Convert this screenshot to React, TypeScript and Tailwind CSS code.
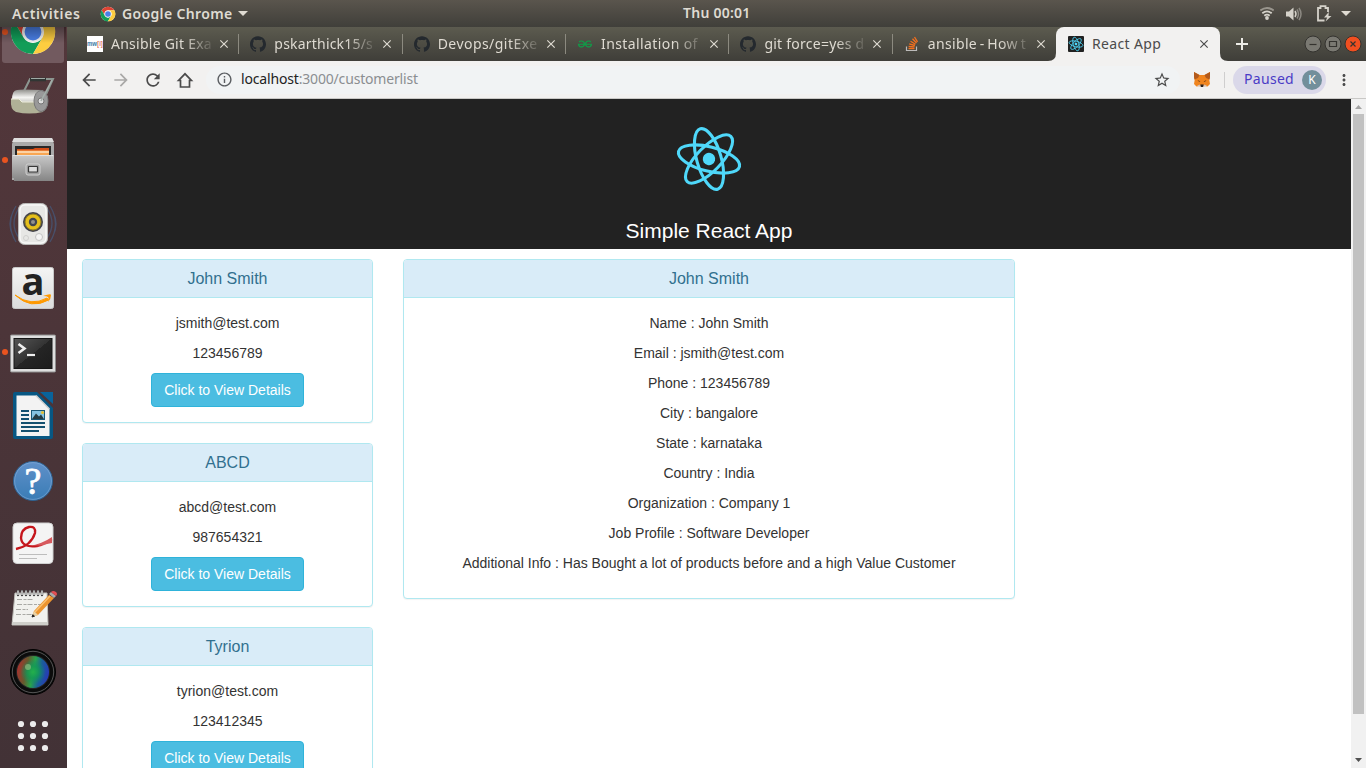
import type { ReactNode } from "react";
import { MdArrowBack, MdArrowForward, MdRefresh, MdStarBorder, MdInfoOutline, MdMoreVert, MdClose } from "react-icons/md";
import { SiGithub, SiGeeksforgeeks } from "react-icons/si";

const UI = "font-['Noto_Sans',sans-serif]";

function ReactAtom({ className, stroke = 3.1 }: { className: string; stroke?: number }) {
  return (
    <svg viewBox="-40 -40 80 80" className={className} fill="none" stroke="#4fd8fa" strokeWidth={stroke}>
      <g transform="rotate(14)">
        <ellipse rx="31.4" ry="12.2" />
        <ellipse rx="31.4" ry="12.2" transform="rotate(60)" />
        <ellipse rx="31.4" ry="12.2" transform="rotate(120)" />
        <circle r="6.2" fill="#4fd8fa" stroke="none" />
      </g>
    </svg>
  );
}

function ChromeLogo({ className }: { className: string }) {
  return (
    <svg viewBox="0 0 48 48" className={className}>
      <circle cx="24" cy="24" r="22" fill="#fff" />
      <path d="M24 13H43.1A22 22 0 0 0 4.9 13L14.5 29.5A11 11 0 0 1 24 13Z" fill="#de4434" />
      <path d="M14.5 29.5L4.9 13A22 22 0 0 0 24 46L33.5 29.5A11 11 0 0 1 14.5 29.5Z" fill="#129d58" />
      <path d="M33.5 29.5L24 46A22 22 0 0 0 43.1 13H24A11 11 0 0 1 33.5 29.5Z" fill="#fdcd40" />
      <circle cx="24" cy="24" r="10.4" fill="#f1f1f1" />
      <circle cx="24" cy="24" r="8.4" fill="#4a80e8" />
    </svg>
  );
}

function TopBar() {
  return (
    <header className={`relative z-10 flex h-[27px] shrink-0 items-center bg-linear-to-b from-[#5a554d] to-[#403f3a] text-[14px] font-semibold text-[#dfdbd2] ${UI}`}>
      <div className="flex w-[683px] items-center">
        <span className="w-[88px] pl-3 tracking-[0.6px]">Activities</span>
        <ChromeLogo className="ml-3 size-4" />
        <span className="ml-[6px] w-[111px] whitespace-nowrap tracking-[0.35px]">Google Chrome</span>
        <svg viewBox="0 0 10 5" className="ml-[5px] h-[5px] w-[10px] fill-[#dfdbd2]"><path d="M0 0H10L5 5Z" /></svg>
      </div>
      <span className="whitespace-nowrap pb-[2px] tracking-[0.25px]">Thu 00:01</span>
      <div className="ml-auto flex items-center pr-[15px]">
        <svg viewBox="0 0 14 13" className="mr-[-1px] h-[13px] w-[14px]" fill="none" stroke="#d5d2ca" strokeWidth="1.8">
          <path d="M.3 3.5Q7-1.5 13.7 3.5" stroke="#99958d" />
          <path d="M2.3 6.3Q7 2.5 11.7 6.3M4.3 8.8Q7 6.5 9.7 8.8" />
          <circle cx="7" cy="11" r="1.9" fill="#d5d2ca" stroke="none" />
        </svg>
        <svg viewBox="0 0 16 14" className="ml-[13px] h-[14px] w-[16px]" fill="none" strokeWidth="1.5">
          <path d="M0 4.5H3L7.5.5V13.5L3 9.5H0Z" fill="#d5d2ca" />
          <path d="M9 4Q11 7 9 10" stroke="#d5d2ca" />
          <path d="M11 2.5Q14 7 11 11.5M13 1Q17 7 13 13" stroke="#8c8982" />
        </svg>
        <svg viewBox="0 0 15 17" className="ml-[15px] h-[17px] w-[15px]" fill="none" stroke="#d5d2ca" strokeWidth="1.8">
          <path d="M7.5 15.5H1V3H3.5V1.2H8.5V3H11V7" />
          <path d="M11.8 7L7 12.5H10.2L8.5 16.5L14.5 11H11.5Z" fill="#d5d2ca" stroke="none" />
        </svg>
        <svg viewBox="0 0 10 5" className="ml-[9px] h-[5px] w-[10px] fill-[#dfdbd2]"><path d="M0 0H10L5 5Z" /></svg>
      </div>
    </header>
  );
}

function Dot() {
  return <span className="absolute top-[29px] left-[2px] size-[6px] rounded-full bg-[#e95420]" />;
}

function DockItem({ children, running = false, active = false }: { children: ReactNode; running?: boolean; active?: boolean }) {
  return (
    <div className="relative flex h-16 w-[66px] shrink-0 items-center justify-center">
      {active && <span className="absolute top-0 left-[2px] h-[63px] w-[62px] rounded-[3px] bg-[#725a5f]" />}
      {running && <Dot />}
      {children}
    </div>
  );
}

function Dock() {
  const icon = "relative size-12";
  return (
    <nav className="w-[67px] shrink-0 overflow-hidden bg-linear-to-b from-[#53373b] to-[#423236]">
      <div className="-mt-[27px] flex flex-col">
        <DockItem running active>
          <ChromeLogo className={icon} />
          <span className="absolute top-[27px] left-0 h-4 w-full bg-linear-to-b from-black/35 to-transparent" />
        </DockItem>
        <DockItem>
          <svg viewBox="0 0 48 48" className={icon}>
            <defs>
              <linearGradient id="roll" x1="0" y1="0" x2="0" y2="1"><stop offset="0" stopColor="#8f8f8b" /><stop offset=".35" stopColor="#f4f4f2" /><stop offset="1" stopColor="#77776f" /></linearGradient>
            </defs>
            <path d="M14 21L21 7H44L34 29" fill="none" stroke="#8b9690" strokeWidth="2" />
            <path d="M21 7.5H37" stroke="#303634" strokeWidth="3.6" />
            <path d="M22 6.5H36" stroke="#a0aaa5" strokeWidth="1" />
            <path d="M8 18Q11 17 33 18Q39 20 39 29T33 40H9Q3 38 3 28T8 18Z" fill="url(#roll)" />
            <path d="M2 27H10L13 30H30L34 40Q20 43 7 40Q1 38 2 27Z" fill="#b0b197" />
            <path d="M2 27H10L13 30H29" fill="none" stroke="#eeeedd" />
            <ellipse cx="32" cy="29" rx="7" ry="10.5" fill="#999" stroke="#777" />
            <circle cx="32" cy="29" r="3" fill="#ddd" stroke="#777" />
            <path d="M32 29L43 8" stroke="#a5afaa" strokeWidth="1.6" />
          </svg>
        </DockItem>
        <DockItem running>
          <svg viewBox="0 0 48 48" className={icon}>
            <defs><linearGradient id="cab" x1="0" y1="0" x2="0" y2="1"><stop stopColor="#c9c9c9" /><stop offset="1" stopColor="#858585" /></linearGradient></defs>
            <path d="M5 2H43L45 8V44H3V8Z" fill="#aaa" />
            <path d="M5 2H43L45 6H3Z" fill="#dedede" />
            <path d="M6 10H42V20H6Z" fill="#292929" />
            <path d="M8 13H24L26 12H40V20H8Z" fill="#d34e18" />
            <path d="M8 14.5H40V20H8Z" fill="#f8a653" />
            <path d="M8 16H40" stroke="#fff0db" strokeWidth="1.2" />
            <path d="M3 19H45V45H5V42H3Z" fill="url(#cab)" />
            <path d="M4 19.5H44" stroke="#e1e1e1" />
            <rect x="17" y="28" width="14" height="11" rx="2" fill="#a1a1a1" stroke="#d1d1d1" />
            <rect x="19.5" y="30.5" width="9" height="5.5" rx=".5" fill="#ddd" stroke="#383838" strokeWidth="1.2" />
          </svg>
        </DockItem>
        <DockItem>
          <svg viewBox="0 0 48 48" className={icon}>
            <path d="M7 6Q-4 24 7 42M41 6Q52 24 41 42M4 12Q-2 24 4 36M44 12Q50 24 44 36M10 8Q0 24 10 38M38 8Q48 24 38 38" fill="none" stroke="#48506a" strokeWidth="1.3" />
            <rect x="9.5" y="3.5" width="29" height="41" rx="6" fill="#e7e7e5" stroke="#babab8" />
            <rect x="11" y="5" width="26" height="38" rx="5" fill="none" stroke="#fff" />
            <circle cx="24" cy="22" r="10" fill="#43434b" />
            <circle cx="24" cy="22" r="8" fill="#e5bf1b" stroke="#907d22" />
            <circle cx="24" cy="22" r="4.2" fill="#414651" />
            <circle cx="24" cy="22" r="2" fill="#92918b" />
            <circle cx="30" cy="37" r="3.5" fill="#f5f5f5" stroke="#c4c4c4" />
            <circle cx="17" cy="38" r="2.5" fill="none" stroke="#d0d0ce" />
          </svg>
        </DockItem>
        <DockItem>
          <svg viewBox="0 0 48 48" className={icon}>
            <defs><linearGradient id="amz" x1="0" y1="0" x2="0" y2="1"><stop stopColor="#f4f4f4" /><stop offset="1" stopColor="#dcdcdc" /></linearGradient></defs>
            <rect x="3.5" y="3.5" width="41" height="41" rx="2" fill="url(#amz)" stroke="#c8c8c8" />
            <text x="24" y="31" textAnchor="middle" fontFamily="Open Sans" fontWeight="700" fontSize="38" fill="#222">a</text>
            <path d="M6 31Q22 43 38 34L39.5 36Q22 46 6 31Z" fill="#f90" stroke="#f90" />
            <path d="M34 32Q42 29 42 31Q42 35 39 38Q40 34 39 33Q38 32 34 32Z" fill="#f90" />
          </svg>
        </DockItem>
        <DockItem running>
          <svg viewBox="0 0 48 48" className={icon}>
            <defs><linearGradient id="term" x1="0" y1="0" x2="1" y2="1"><stop stopColor="#555" /><stop offset=".5" stopColor="#333" /><stop offset=".5" stopColor="#252525" /><stop offset="1" stopColor="#1c1c1c" /></linearGradient></defs>
            <rect x="1.5" y="7" width="45" height="37" rx="1" fill="#dedede" stroke="#8e8e8e" />
            <rect x="5" y="10.5" width="38" height="30" fill="url(#term)" stroke="#161616" />
            <path d="M9.5 16L15.5 20.5L9.5 25" fill="none" stroke="#eee" strokeWidth="2.6" />
            <path d="M18 27H26" stroke="#eee" strokeWidth="2.2" />
          </svg>
        </DockItem>
        <DockItem>
          <svg viewBox="0 0 48 48" className={icon}>
            <path d="M6 0H28L44 16V45Q44 47 42 47H6Q4 47 4 45V2Q4 0 6 0Z" fill="#075783" />
            <path d="M31 0H44V12Z" fill="#0a639a" />
            <path d="M7.5 3.5H27L40.5 17V44H7.5Z" fill="#f3f3f3" />
            <path d="M27 3.5L40.5 17" stroke="#cfcfcf" strokeWidth="1.5" />
            <path d="M12 19H20M12 23H20M12 27H20M12 31H36M12 35H36M12 39H30" stroke="#14506f" strokeWidth="2" />
            <rect x="22" y="18" width="14" height="10" fill="#1b5775" />
            <rect x="23" y="19" width="12" height="8" fill="#86c2e1" />
            <path d="M23 27L27 21.5L30 24.5L32 22.5L35 27Z" fill="#263b42" />
            <circle cx="33.5" cy="20.5" r="1.6" fill="#e5bf35" />
          </svg>
        </DockItem>
        <DockItem>
          <svg viewBox="0 0 48 48" className={icon}>
            <defs><linearGradient id="help" x1="0" y1="0" x2="0" y2="1"><stop stopColor="#6090c9" /><stop offset="1" stopColor="#397cb5" /></linearGradient></defs>
            <circle cx="24" cy="25" r="19.5" fill="url(#help)" stroke="#2e6190" />
            <circle cx="24" cy="25" r="18.4" fill="none" stroke="#83acd8" strokeOpacity=".6" />
            <text x="24" y="38" textAnchor="middle" fontFamily="Liberation Serif" fontSize="38" fill="#fff" stroke="#fff" strokeWidth=".8">?</text>
          </svg>
        </DockItem>
        <DockItem>
          <svg viewBox="0 0 48 48" className={icon}>
            <defs><linearGradient id="swoosh" x1="0" y1="0" x2="1" y2="0"><stop stopColor="#c5161c" /><stop offset=".55" stopColor="#c5161c" /><stop offset="1" stopColor="#e9999b" /></linearGradient></defs>
            <rect x="4" y="3" width="40" height="40.5" rx="4" fill="#f4f4f4" stroke="#d0d0d0" />
            <path d="M7 29Q22 26 26 13Q27 6 20 7Q12 9 12 18Q13 28 28 26Q37 24 43 19" fill="none" stroke="url(#swoosh)" strokeWidth="2.4" />
            <path d="M20 26Q33 24 43 17V23Q32 26 20 26Z" fill="#d75a5e" />
            <path d="M10 34.5H38M10 38.5H28" stroke="#bdbdbd" strokeWidth="1.2" />
          </svg>
        </DockItem>
        <DockItem>
          <svg viewBox="0 0 48 48" className={icon}>
            <path d="M6 9H38L39 41H3Z" fill="#f1f1ee" stroke="#bfbfba" />
            <path d="M3 38H39V41H3Z" fill="#cfcfca" />
            <path d="M9 11V7M13 11V7M17 11V7M21 11V7M25 11V7M29 11V7M33 11V7" stroke="#444" strokeWidth="2.4" strokeLinecap="round" />
            <path d="M9 11V6.5M13 11V6.5M17 11V6.5M21 11V6.5M25 11V6.5M29 11V6.5M33 11V6.5" stroke="#eee" strokeWidth="1.3" />
            <path d="M8 15.5H24M8 20.5H32M7 25.5H19M7 30.5H28" stroke="#a9a9a5" strokeWidth="1" strokeDasharray="5 1.5 3 1" />
            <path d="M25 27L40 11L45 14L29 31L23 33Z" fill="#ec942f" />
            <path d="M25 27L23 33L29 31Z" fill="#e8d2a6" />
            <path d="M23 33L23.8 30.7L25.5 32.2Z" fill="#222" stroke="#222" />
            <path d="M26 28L41 12" stroke="#fac274" strokeWidth="1.5" />
            <path d="M40 10L42 8L47 12L45 14Z" fill="#aaa" />
            <path d="M42 8Q44 6 47 8Q49 10 47 12Z" fill="#e44e54" />
          </svg>
        </DockItem>
        <DockItem>
          <svg viewBox="0 0 48 48" className={icon}>
            <defs>
              <linearGradient id="lens" x1="0" y1=".4" x2="1" y2=".6"><stop stopColor="#a9322f" /><stop offset=".28" stopColor="#655a2d" /><stop offset=".5" stopColor="#27a34b" /><stop offset=".72" stopColor="#1a5e9a" /><stop offset="1" stopColor="#2838b8" /></linearGradient>
              <radialGradient id="core"><stop stopColor="#24b04c" /><stop offset=".5" stopColor="#129a55" stopOpacity=".8" /><stop offset="1" stopColor="#128a68" stopOpacity=".1" /></radialGradient>
            </defs>
            <circle cx="24" cy="24" r="22.5" fill="#0c0c0c" stroke="#000" />
            <circle cx="24" cy="24" r="20.7" fill="none" stroke="#666" strokeWidth=".8" />
            <circle cx="24" cy="24" r="17" fill="#252525" />
            <circle cx="24" cy="24" r="16" fill="url(#lens)" />
            <circle cx="24" cy="24" r="12" fill="url(#core)" />
            <circle cx="19" cy="19" r="3" fill="#8dbb7d" fillOpacity=".7" />
          </svg>
        </DockItem>
        <DockItem>
          <svg viewBox="0 0 48 48" className={icon} fill="#ececec">
            {[12, 24, 36].map((y) => [12, 24, 36].map((x) => <circle key={`${x}-${y}`} cx={x} cy={y} r="3.1" />))}
          </svg>
        </DockItem>
      </div>
    </nav>
  );
}

const tabs = [
  { title: "Ansible Git Exa", kind: "mw", cls: "tracking-[0.25px]" },
  { title: "pskarthick15/s", kind: "gh", cls: "tracking-[0.2px]" },
  { title: "Devops/gitExe", kind: "gh", cls: "tracking-[0.45px]" },
  { title: "Installation of", kind: "gfg", cls: "tracking-[0.4px]" },
  { title: "git force=yes d", kind: "gh", cls: "tracking-[0.25px]" },
  { title: "ansible - How t", kind: "so", cls: "tracking-[0.35px] [word-spacing:-1.3px]" },
];

function Favicon({ kind }: { kind: string }) {
  if (kind === "gh") return <SiGithub className="size-4 shrink-0 text-[#24292e]" />;
  if (kind === "so")
    return (
      <svg viewBox="0 0 16 16" className="size-4 shrink-0" fill="none">
        <path d="M2.5 10.5V14.5H12.5V10.5" stroke="#bcbbbb" strokeWidth="1.2" />
        <path d="M4.5 12.5H10.5M4.6 10.3L10.5 10.9M5.2 7.9L10.9 9.5M6.5 5.2L11.5 8.3M8.5 2.8L12.5 7M10.5 1L13.5 5.8" stroke="#f4701e" strokeWidth="1.3" />
      </svg>
    );
  if (kind === "gfg")
    return (
      <span className="flex size-4 shrink-0 items-center justify-center">
        <SiGeeksforgeeks className="size-[14px] text-[#0f9d48]" />
      </span>
    );
  return (
    <svg viewBox="0 0 16 16" className="size-4 shrink-0">
      <rect width="16" height="16" fill="#fff" />
      <text x="0" y="10" textLength="10" lengthAdjust="spacingAndGlyphs" fontFamily="Liberation Sans" fontWeight="700" fontSize="7" fill="#3b79a6">mw</text>
      <text x="10" y="10" textLength="6" lengthAdjust="spacingAndGlyphs" fontFamily="Liberation Sans" fontSize="7" fill="#dc5749">[i]</text>
    </svg>
  );
}

function TabStrip() {
  return (
    <div className={`flex h-[34px] bg-linear-to-b from-[#5c5b4f] to-[#3f3e39] pl-[9px] text-[14px] ${UI}`}>
      {tabs.map((t, i) => (
        <div key={t.title} className="flex w-[163.35px] shrink-0 items-center pl-[11px] text-[#dfdbd2]">
          <Favicon kind={t.kind} />
          <span className={`ml-2 w-[105px] overflow-hidden whitespace-nowrap pb-px mask-[linear-gradient(to_right,#000_72px,transparent_105px)] ${t.cls}`}>{t.title}</span>
          <MdClose className="ml-[1px] size-[14px] shrink-0" />
          {i < 5 && <span className="ml-auto h-5 w-px bg-[#8c8a80]" />}
        </div>
      ))}
      <div className="relative flex w-[164px] shrink-0 items-center rounded-t-[8px] bg-[#f2f1f0] pl-[11.9px] text-[#4b4b4b]">
        <svg viewBox="0 0 8 8" className="absolute bottom-0 -left-2 size-2 fill-[#f2f1f0]"><path d="M8 0Q8 8 0 8H8Z" /></svg>
        <svg viewBox="0 0 8 8" className="absolute -right-2 bottom-0 size-2 fill-[#f2f1f0]"><path d="M0 0Q0 8 8 8H0Z" /></svg>
        <span className="flex size-4 items-center justify-center rounded-[1px] bg-[#222]"><ReactAtom className="size-[18px] shrink-0" stroke={3.6} /></span>
        <span className="ml-2 w-[104px] pb-px tracking-[0.35px]">React App</span>
        <MdClose className="ml-[1px] size-[14px]" />
      </div>
      <svg viewBox="0 0 18 18" className="mt-[8px] ml-[13px] size-[18px]" stroke="#ecebe6" strokeWidth="2"><path d="M3 9H15M9 3V15" /></svg>
      <div className="ml-auto flex items-center gap-[2px] pr-[4px]">
        {["M5.5 9.5H12.5", "M5.5 6.5H12.5V11.5H5.5Z", "M6.5 6.5L11.5 11.5M11.5 6.5L6.5 11.5"].map((d, i) => (
          <svg key={d} viewBox="0 0 18 18" className="size-[18px]" fill="none">
            <circle cx="9" cy="9" r="8" fill={i === 2 ? "#f04f20" : "#7a7972"} stroke="#34332f" strokeWidth="1" />
            <path d={d} stroke="#34332f" strokeWidth="1.2" />
          </svg>
        ))}
      </div>
    </div>
  );
}

function Toolbar() {
  return (
    <div className={`flex h-[38px] items-center border-b border-[#c9c8c6] bg-[#f2f1f0] pl-[12px] text-[14px] text-[#4b4b4b] ${UI}`}>
      <MdArrowBack className="size-5" />
      <MdArrowForward className="ml-3 size-5 text-[#a9a8a7]" />
      <MdRefresh className="ml-[12px] size-5" />
      <svg viewBox="0 0 20 20" className="ml-[12px] size-5" fill="none" stroke="currentColor" strokeWidth="1.7"><path d="M3.6 10.5H5.500V17H14.500V10.500H16.400L10 3.800Z" /></svg>
      <div className="ml-[11px] flex h-7 w-[974px] items-center rounded-full bg-[#f1f3f4] pr-[9px] pl-[10px]">
        <MdInfoOutline className="size-[17px] text-[#5a5d61]" />
        <span className="ml-2 pb-[2px] tracking-[-0.17px] text-[#8b8e91]"><span className="text-[#222]">localhost</span>:3000/customerlist</span>
        <MdStarBorder className="ml-auto size-[18px]" />
      </div>
      <svg viewBox="0 0 18 17" className="ml-[13px] h-[17px] w-[18px]">
        <path d="M1 1L6.5 4H11.5L17 1V6L16.3 9L17 13L14.5 15.5L11 15H7L3.5 15.5L1 13L1.7 9L1 6Z" fill="#f0841e" />
        <path d="M1 1L6.5 4L5 7L1.5 8.5L1 6ZM17 1L11.5 4L13 7L16.5 8.5L17 6Z" fill="#b35a1c" />
        <path d="M4.5 9L7.5 10.5L6 10.8ZM13.5 9L10.5 10.5L12 10.8Z" fill="#5a3519" />
        <path d="M7.2 13.5H10.8L10.3 16H7.7Z" fill="#2b2320" />
        <path d="M4 14.5L7.2 13.5L7.5 16ZM14 14.5L10.8 13.5L10.5 16Z" fill="#d5bfb2" />
      </svg>
      <span className="ml-[13px] h-4 w-px bg-[#cfcece]" />
      <div className="ml-2 flex h-7 w-[93px] items-center rounded-full bg-[#dad8e9] pr-1 pl-[11px] text-[#4a3cc6]">
        <span className="pb-[2px] tracking-[0.3px]">Paused</span>
        <span className="ml-auto flex size-5 items-center justify-center rounded-full bg-[#728f9b] text-[12px] text-white">K</span>
      </div>
      <MdMoreVert className="ml-[9px] size-[18px]" />
    </div>
  );
}

const customers = [
  { name: "John Smith", email: "jsmith@test.com", phone: "123456789" },
  { name: "ABCD", email: "abcd@test.com", phone: "987654321" },
  { name: "Tyrion", email: "tyrion@test.com", phone: "123412345" },
];

const details = [
  "Name : John Smith",
  "Email : jsmith@test.com",
  "Phone : 123456789",
  "City : bangalore",
  "State : karnataka",
  "Country : India",
  "Organization : Company 1",
  "Job Profile : Software Developer",
  "Additional Info : Has Bought a lot of products before and a high Value Customer",
];

function Panel({ title, children }: { title: string; children: ReactNode }) {
  return (
    <section className="mb-5 rounded-[4px] border border-[#b0e8f0] bg-white shadow-[0_1px_1px_rgba(0,0,0,0.05)]">
      <h3 className="rounded-t-[3px] border-b border-[#b0e8f0] bg-[#d9ecf8] px-[15px] py-[10px] text-base leading-[17px] text-[#31708f]">{title}</h3>
      <div className="p-[15px]">{children}</div>
    </section>
  );
}

function Page() {
  return (
    <div className="flex min-h-0 flex-1 bg-white font-['Liberation_Sans',sans-serif] text-[14px] leading-5 text-[#333]">
      <main className="min-w-0 flex-1 overflow-hidden text-center">
        <header className="flex h-[150px] flex-col items-center bg-[#222] pt-5 text-white">
          <ReactAtom className="size-20" />
          <h2 className="mt-[20px] text-[21px] leading-[24px]">Simple React App</h2>
        </header>
        <div className="mt-[10px] flex items-start">
          <div className="w-1/4 px-[15px]">
            {customers.map((c) => (
              <Panel key={c.name} title={c.name}>
                <p className="mb-[10px]">{c.email}</p>
                <p className="mb-[10px]">{c.phone}</p>
                <button className="mx-auto block h-[34px] rounded-[4px] border border-[#2fb3da] bg-[#4bbde1] px-3 text-white">Click to View Details</button>
              </Panel>
            ))}
          </div>
          <div className="w-1/2 px-[15px]">
            <Panel title="John Smith">
              {details.map((d) => (
                <p key={d} className="mb-[10px]">{d}</p>
              ))}
            </Panel>
          </div>
        </div>
      </main>
      <div className="flex w-[15px] shrink-0 flex-col items-center bg-[#f1f1f1]">
        <svg viewBox="0 0 15 15" className="size-[15px] shrink-0 fill-[#a3a3a3]"><path d="M4 10H11L7.5 6Z" /></svg>
        <div className="h-[600px] w-[11px] shrink-0 bg-[#c1c1c1]" />
        <svg viewBox="0 0 15 15" className="mt-auto size-[15px] shrink-0 fill-[#505050]"><path d="M4 5H11L7.5 9Z" /></svg>
      </div>
    </div>
  );
}

export default function App() {
  return (
    <div className="flex h-screen w-full flex-col overflow-hidden">
      <TopBar />
      <div className="flex min-h-0 flex-1">
        <Dock />
        <div className="flex min-w-0 flex-1 flex-col">
          <TabStrip />
          <Toolbar />
          <Page />
        </div>
      </div>
    </div>
  );
}
